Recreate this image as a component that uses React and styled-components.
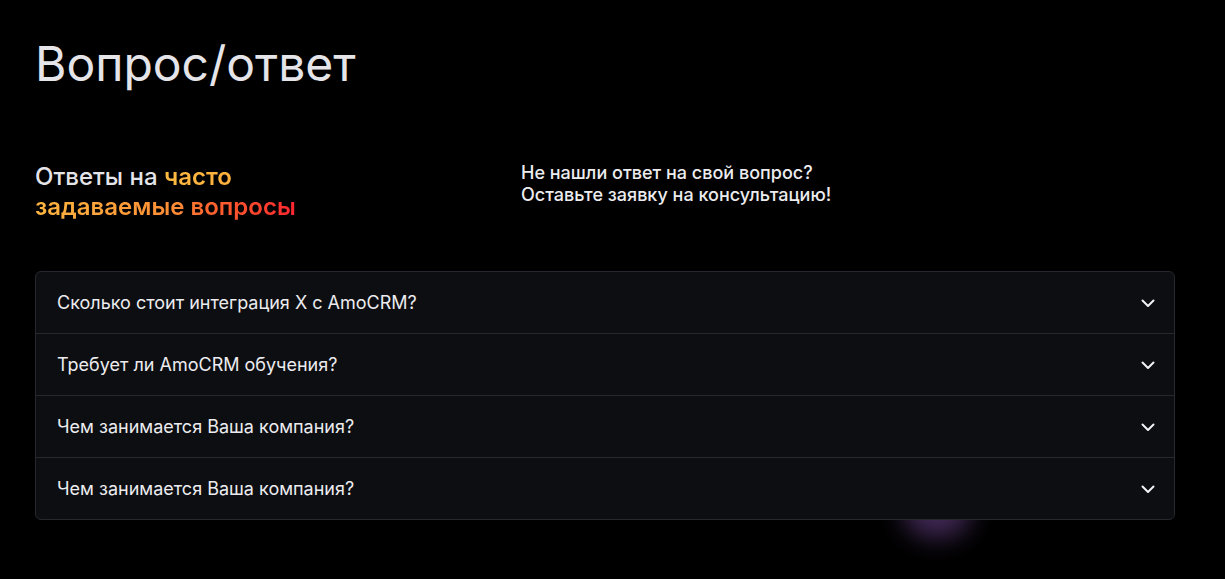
import React, { useState } from "react";
import styled, { createGlobalStyle } from "styled-components";

const faq = [
  "Сколько стоит интеграция X с AmoCRM?",
  "Требует ли AmoCRM обучения?",
  "Чем занимается Ваша компания?",
  "Чем занимается Ваша компания?",
];

const gradients = {
  warm: "linear-gradient(90deg, #ffba42 0%, #ffb03d 100%)",
  hot: "linear-gradient(90deg, #ffb640 0%, #ffa03a 30%, #ff8a35 55%, #ff6a30 64%, #ff4a2d 82%, #ff2530 100%)",
};

const Chevron = () => (
  <svg width="16" height="16" viewBox="0 0 16 16" fill="none">
    <path d="M2.5 5.5L8 11l5.5-5.5" stroke="#f2f2f4" strokeWidth="2" strokeLinecap="round" strokeLinejoin="round" />
  </svg>
);

const App = () => {
  const [open, setOpen] = useState(null);

  return (
    <>
      <GlobalStyle />
      <Section>
        <Title>Вопрос/ответ</Title>
        <Intro>
          <Lead>
            Ответы на <Accent $tone="warm">часто</Accent>{" "}
            <Accent $tone="hot">задаваемые вопросы</Accent>
          </Lead>
          <Note>
            Не нашли ответ на свой вопрос?
            <br />
            Оставьте заявку на консультацию!
          </Note>
        </Intro>
        <AccordionWrap>
          <Accordion>
            {faq.map((q, i) => (
              <Item key={i}>
                <Question onClick={() => setOpen(open === i ? null : i)}>
                  <span>{q}</span>
                  <Chevron />
                </Question>
              </Item>
            ))}
          </Accordion>
          <Glow />
        </AccordionWrap>
      </Section>
    </>
  );
};

const GlobalStyle = createGlobalStyle`
  html, body {
    margin: 0;
    background: #000;
  }
  body {
    font-family: Inter, "Noto Sans", sans-serif;
    color: #e6e6ea;
  }
`;

const Section = styled.section`
  width: 1175px;
  min-height: 100vh;
  box-sizing: border-box;
  padding: 35px 0 0 35px;
  overflow: hidden;
`;

const Title = styled.h1`
  margin: 0;
  font-size: 48px;
  font-weight: 400;
  line-height: 58px;
  color: #e4e4e9;
`;

const Intro = styled.div`
  display: grid;
  grid-template-columns: 486px 1fr;
  align-items: start;
  margin-top: 69px;
`;

const Lead = styled.h2`
  max-width: 290px;
  margin: 0;
  font-size: 24px;
  font-weight: 500;
  line-height: 30px;
  color: #e4e4e9;
`;

const Accent = styled.span`
  font-weight: 600;
  background: ${({ $tone }) => gradients[$tone]};
  -webkit-background-clip: text;
  background-clip: text;
  color: transparent;
`;

const Note = styled.p`
  margin: 0;
  font-size: 18px;
  font-weight: 500;
  line-height: 22px;
  color: #ececef;
`;

const AccordionWrap = styled.div`
  position: relative;
  margin-top: 49px;
`;

const Glow = styled.div`
  position: absolute;
  left: 868px;
  bottom: -18px;
  width: 68px;
  height: 52px;
  border-radius: 50%;
  background: #6e4590;
  filter: blur(13px);
  opacity: 0.6;
  pointer-events: none;
`;

const Accordion = styled.div`
  position: relative;
  z-index: 1;
  background: #0d0e12;
  border: 1px solid #27282d;
  border-radius: 6px;
  overflow: hidden;
`;

const Item = styled.div`
  & + & {
    border-top: 1px solid #27282d;
  }
`;

const Question = styled.button`
  width: 100%;
  height: 61px;
  display: flex;
  align-items: center;
  justify-content: space-between;
  padding: 0 18px 0 21px;
  background: transparent;
  border: 0;
  font-family: inherit;
  font-size: 18px;
  font-weight: 400;
  color: #ececef;
  cursor: pointer;
  text-align: left;
`;

export default App;
